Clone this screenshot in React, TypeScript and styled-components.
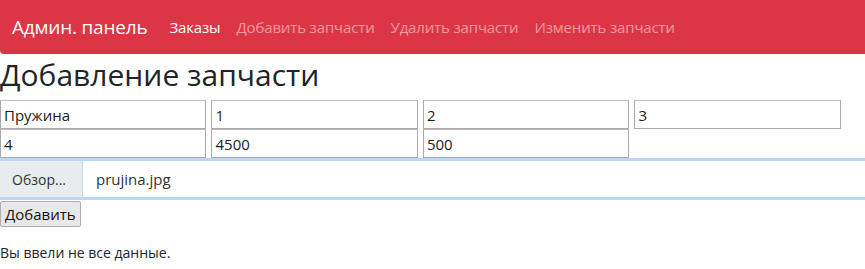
import React, { FunctionComponent } from 'react'
import styled, { createGlobalStyle } from 'styled-components'

const GlobalStyle = createGlobalStyle`
  html, body {
    margin: 0;
    padding: 0;
    background: #fff;
    font-family: 'Open Sans', 'Noto Sans', sans-serif;
    color: #212529;
  }
`

const Navbar = styled.nav`
  display: flex;
  align-items: center;
  height: 54px;
  padding: 0 12px;
  background: #dc3545;
  border-radius: 0 0 0 4px;
`

const Brand = styled.span`
  font-size: 19px;
  color: #fff;
  margin-right: 14px;
  letter-spacing: -0.2px;
`

const NavLink = styled.a<{ $active?: boolean }>`
  font-size: 15px;
  padding: 0 8px;
  color: ${p => (p.$active ? '#fff' : 'rgba(255, 255, 255, 0.5)')};
  text-decoration: none;
  letter-spacing: -0.15px;
`

const Title = styled.h1`
  margin: 3px 0 7px;
  font-size: 30px;
  font-weight: 400;
  line-height: 36px;
`

const Fields = styled.div`
  display: flex;
  flex-wrap: wrap;
  column-gap: 5.3px;
  width: 845px;
`

const Field = styled.input`
  box-sizing: border-box;
  width: 206.2px;
  height: 29px;
  margin: 0;
  padding: 0 3px;
  border: 1px solid #a9a9a9;
  border-top-color: #bdbdbd;
  font-family: 'Open Sans', 'Noto Sans', sans-serif;
  font-size: 15px;
  color: #222;
  background: #fff;
  outline: none;
`

const FileBox = styled.div`
  display: flex;
  align-items: stretch;
  box-sizing: border-box;
  height: 42px;
  border-top: 3px solid #b9d7f9;
  border-bottom: 3px solid #b9d7f9;
`

const FileButton = styled.span`
  display: flex;
  align-items: center;
  width: 83px;
  padding-left: 12px;
  box-sizing: border-box;
  background: #e9ecef;
  border-right: 1px solid #ced4da;
  font-size: 14px;
  color: #333;
`

const FileName = styled.span`
  display: flex;
  align-items: center;
  padding-left: 13px;
  font-size: 15px;
  color: #333;
`

const SubmitButton = styled.button`
  display: block;
  margin: 1px 0 0;
  height: 26px;
  padding: 0 4px;
  border: 1px solid #adadad;
  border-radius: 2px;
  background: #e8e8e8;
  font-family: 'Open Sans', 'Noto Sans', sans-serif;
  font-size: 15px;
  color: #111;
`

const Message = styled.p`
  margin: 16px 0 0;
  font-size: 14px;
  line-height: 20px;
  color: #212529;
`

const values = ['Пружина', '1', '2', '3', '4', '4500', '500']

const App: FunctionComponent = () => (
  <>
    <GlobalStyle />
    <Navbar>
      <Brand>Админ. панель</Brand>
      <NavLink $active>Заказы</NavLink>
      <NavLink>Добавить запчасти</NavLink>
      <NavLink>Удалить запчасти</NavLink>
      <NavLink>Изменить запчасти</NavLink>
    </Navbar>
    <Title>Добавление запчасти</Title>
    <Fields>
      {values.map((v, i) => <Field key={i} defaultValue={v} />)}
    </Fields>
    <FileBox>
      <FileButton>Обзор...</FileButton>
      <FileName>prujina.jpg</FileName>
    </FileBox>
    <SubmitButton>Добавить</SubmitButton>
    <Message>Вы ввели не все данные.</Message>
  </>
)

export default App
